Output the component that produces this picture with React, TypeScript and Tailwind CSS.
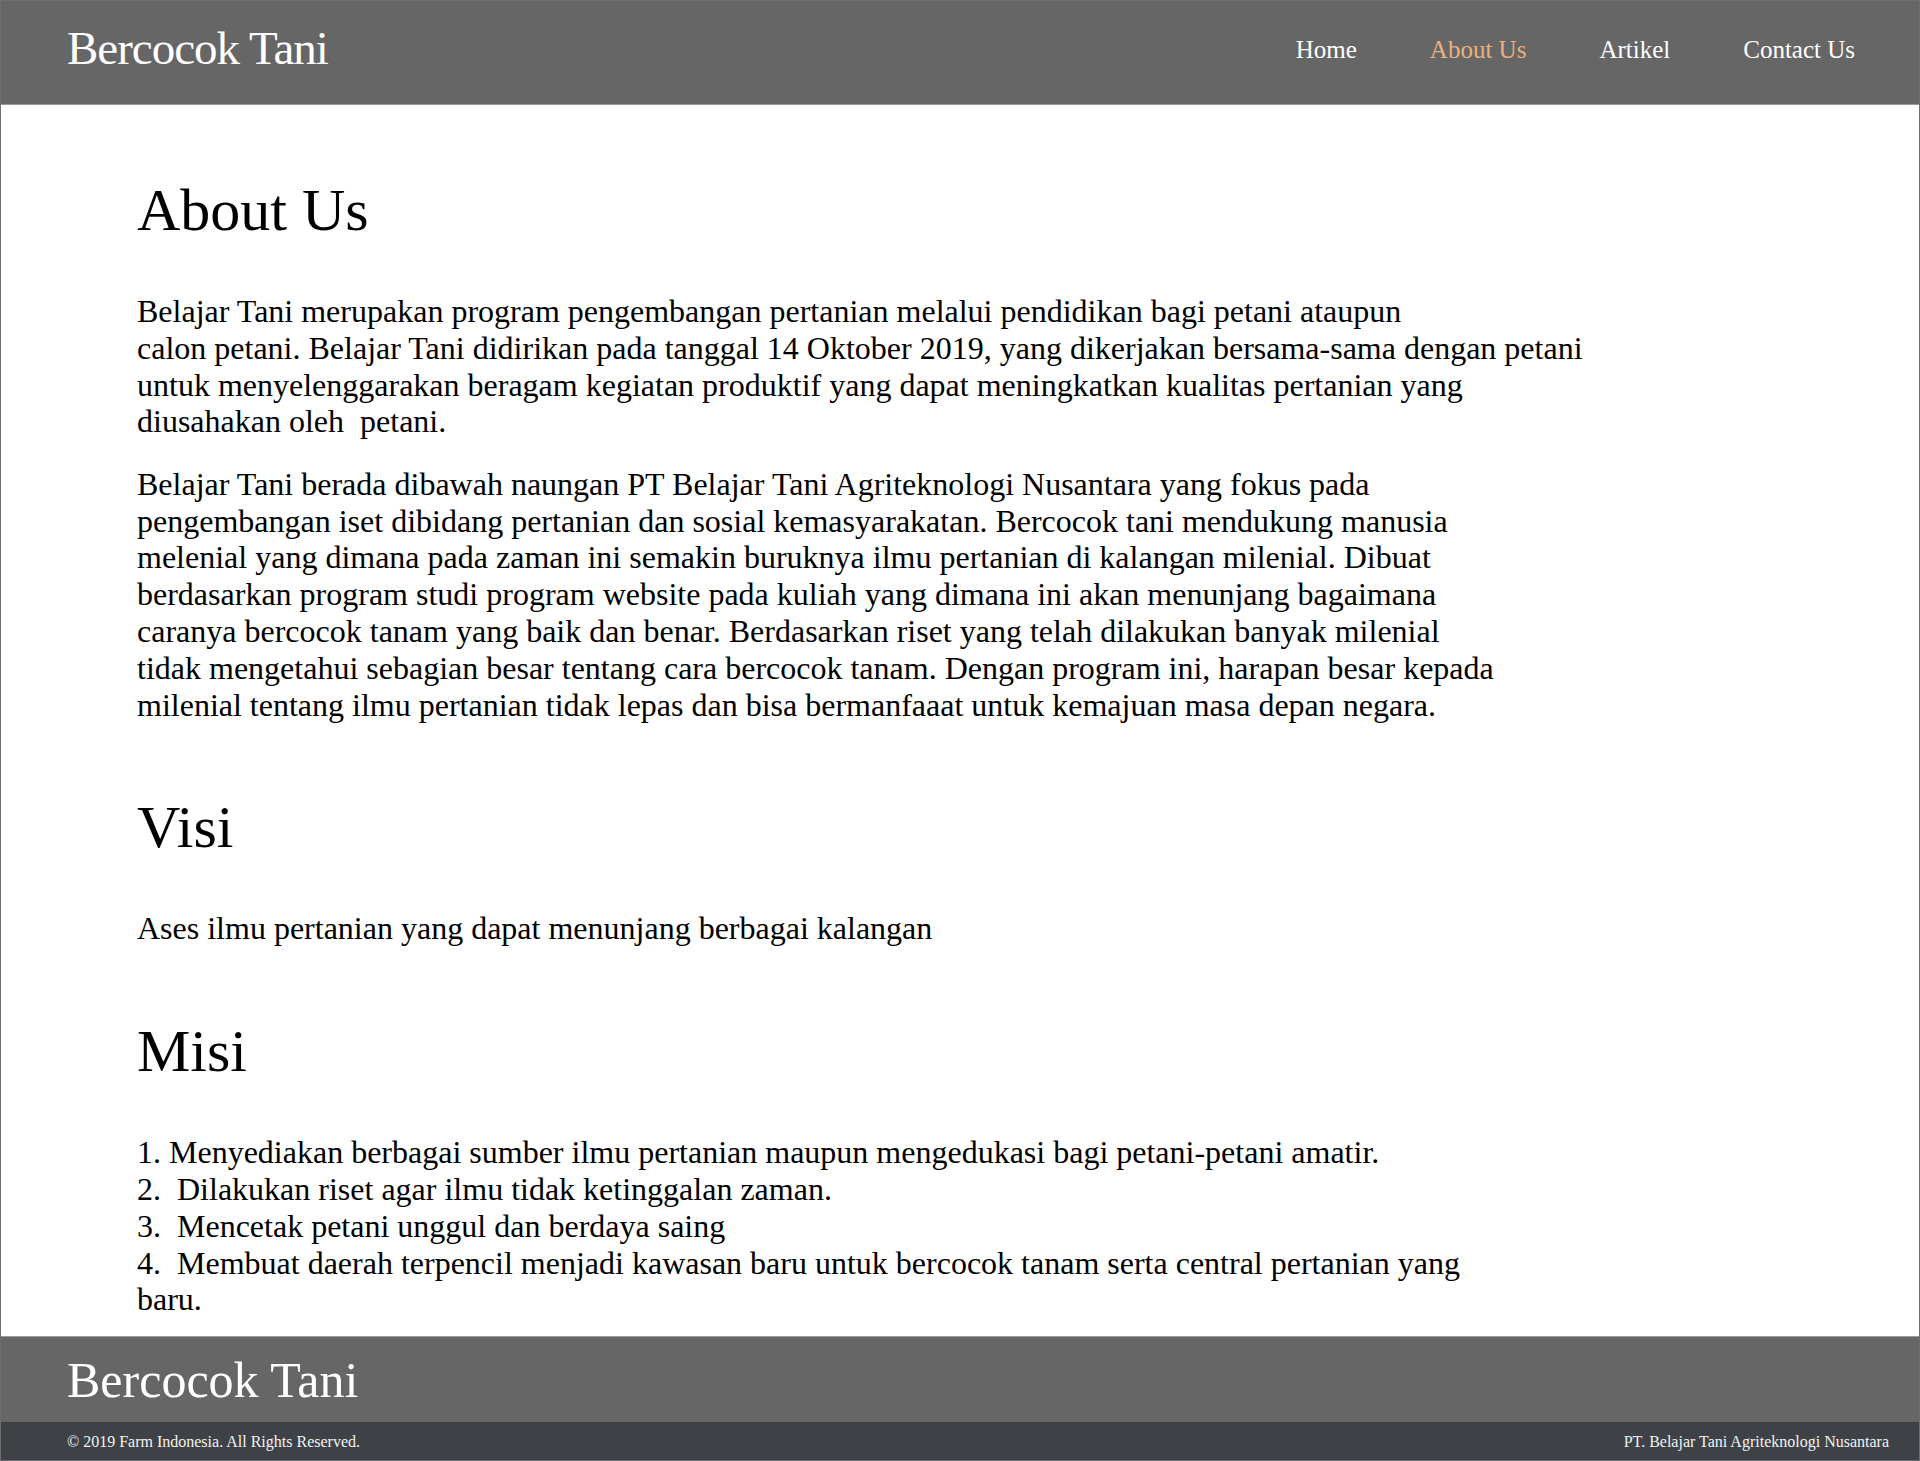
export default function App() {
  const p1 = [
    "Belajar Tani merupakan program pengembangan pertanian melalui pendidikan bagi petani ataupun",
    "calon petani. Belajar Tani didirikan pada tanggal 14 Oktober 2019, yang dikerjakan bersama-sama dengan petani",
    "untuk menyelenggarakan beragam kegiatan produktif yang dapat meningkatkan kualitas pertanian yang",
    "diusahakan oleh  petani.",
  ];
  const p2 = [
    "Belajar Tani berada dibawah naungan PT Belajar Tani Agriteknologi Nusantara yang fokus pada",
    "pengembangan iset dibidang pertanian dan sosial kemasyarakatan. Bercocok tani mendukung manusia",
    "melenial yang dimana pada zaman ini semakin buruknya ilmu pertanian di kalangan milenial. Dibuat",
    "berdasarkan program studi program website pada kuliah yang dimana ini akan menunjang bagaimana",
    "caranya bercocok tanam yang baik dan benar. Berdasarkan riset yang telah dilakukan banyak milenial",
    "tidak mengetahui sebagian besar tentang cara bercocok tanam. Dengan program ini, harapan besar kepada",
    "milenial tentang ilmu pertanian tidak lepas dan bisa bermanfaaat untuk kemajuan masa depan negara.",
  ];
  const misi = [
    "1. Menyediakan berbagai sumber ilmu pertanian maupun mengedukasi bagi petani-petani amatir.",
    "2.  Dilakukan riset agar ilmu tidak ketinggalan zaman.",
    "3.  Mencetak petani unggul dan berdaya saing",
    "4.  Membuat daerah terpencil menjadi kawasan baru untuk bercocok tanam serta central pertanian yang",
    "baru.",
  ];

  const Lines = ({ lines }: { lines: string[] }) => (
    <p className="text-[32px] leading-[36.8px] whitespace-pre text-black">
      {lines.map((l, i) => (
        <span key={i} className="block">
          {l}
        </span>
      ))}
    </p>
  );

  return (
    <div className="w-[1920px] h-[1461px] border border-[#6e6e6e] bg-white font-['Liberation_Serif','Times_New_Roman',serif] flex flex-col overflow-hidden">
      <header className="h-[104px] shrink-0 bg-[#666666] border-b border-[#9a9a9a] flex justify-between items-start pl-[66px] pr-[64px]">
        <div className="mt-[24px] text-[47px] leading-none tracking-[-1px] text-white">
          Bercocok Tani
        </div>
        <nav className="mt-[36px] flex gap-[73px] text-[25px] leading-none">
          <span className="text-white">Home</span>
          <span className="text-[#ebb07c]">About Us</span>
          <span className="text-white">Artikel</span>
          <span className="text-white">Contact Us</span>
        </nav>
      </header>

      <main className="flex-1 min-h-0 pl-[136px]">
        <h1 className="mt-[75px] mb-[53px] text-[60px] leading-none text-black">About Us</h1>
        <Lines lines={p1} />
        <div className="h-[25.6px]" />
        <Lines lines={p2} />

        <h2 className="mt-[74px] mb-[53px] text-[60px] leading-none text-black">Visi</h2>
        <Lines lines={["Ases ilmu pertanian yang dapat menunjang berbagai kalangan"]} />

        <h2 className="mt-[74px] mb-[53px] text-[60px] leading-none text-black">Misi</h2>
        <Lines lines={misi} />
      </main>

      <footer className="shrink-0">
        <div className="h-[86px] bg-[#666666] border-t border-[#9a9a9a] pl-[66px] pt-[18px]">
          <div className="text-[50px] leading-none text-white">Bercocok Tani</div>
        </div>
        <div className="h-[38px] bg-[#3e4246] flex justify-between items-start pl-[66px] pr-[30px] pt-[12px] text-[16px] leading-none text-[#f2f2f2]">
          <span>© 2019 Farm Indonesia. All Rights Reserved.</span>
          <span>PT. Belajar Tani Agriteknologi Nusantara</span>
        </div>
      </footer>
    </div>
  );
}
